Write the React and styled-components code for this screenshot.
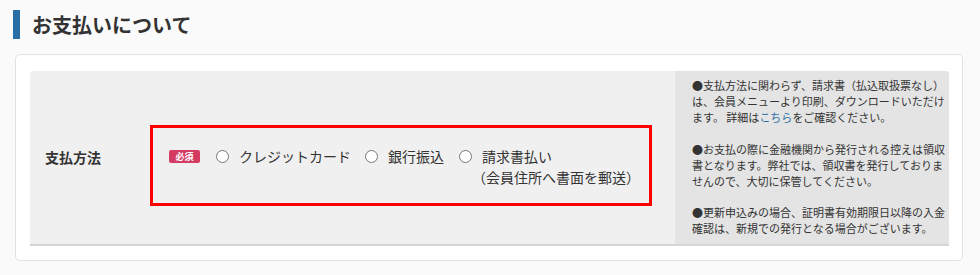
import React from "react";
import styled, { createGlobalStyle } from "styled-components";

const Global = createGlobalStyle`
  html, body { margin: 0; padding: 0; background: #fafafa; }
  body { font-family: "Noto Sans CJK JP", "Noto Sans", sans-serif; color: #333; }
  p { margin: 0; }
`;

const Page = styled.div`
  padding: 10px 17px 0 13px;
`;

const Heading = styled.h2`
  margin: 0;
  display: flex;
  align-items: center;
  gap: 12px;
  height: 29px;
  font-size: 20px;
  font-weight: 700;
  color: #333;
  line-height: 29px;
  &::before {
    content: "";
    width: 7px;
    height: 29px;
    background: #2a6ea6;
  }
`;

const Card = styled.section`
  margin: 15px 0 0 2px;
  background: #fff;
  border: 1px solid #e2e2e2;
  border-radius: 5px;
  padding: 16px 13px 14px 14px;
`;

const Row = styled.div`
  display: flex;
  background: #f0f0f0;
  border-bottom: 2px solid #d6d6d6;
  border-radius: 3px 4px 0 0;
`;

const Label = styled.div`
  width: 120px;
  flex: none;
  box-sizing: border-box;
  padding-left: 15px;
  display: flex;
  align-items: center;
  font-size: 14px;
  font-weight: 700;
  color: #333;
`;

const Content = styled.div`
  flex: 1;
  display: flex;
  align-items: flex-start;
  padding-top: 54px;
`;

const Highlight = styled.div`
  width: 502px;
  box-sizing: border-box;
  border: 3px solid #ff0000;
  padding: 18px 10px 15px 16px;
  display: flex;
  align-items: flex-start;
`;

const Badge = styled.span`
  flex: none;
  width: 31px;
  height: 13px;
  margin-top: 4px;
  border-radius: 2px;
  background: #d33b63;
  color: #fff;
  font-size: 9px;
  font-weight: 700;
  line-height: 13px;
  text-align: center;
  margin-right: 16px;
`;

const Option = styled.label`
  display: flex;
  align-items: flex-start;
  font-size: 14px;
  line-height: 21px;
  color: #333;
  margin-right: ${(p) => p.$gap}px;
`;

const Radio = styled.span`
  flex: none;
  width: 13px;
  height: 13px;
  box-sizing: border-box;
  border: 1px solid #767676;
  border-radius: 50%;
  background: #fff;
  margin-top: 4px;
  margin-right: 10px;
`;

const OptionText = styled.span`
  display: flex;
  flex-direction: column;
  white-space: nowrap;
`;

const SubNote = styled.span`
  margin-left: -10px;
`;

const Notes = styled.div`
  width: 274px;
  flex: none;
  box-sizing: border-box;
  background: #e4e4e4;
  border-radius: 0 4px 0 0;
  padding: 6px 4px 7px 17px;
  font-size: 11px;
  line-height: 16.2px;
  color: #333;
  white-space: nowrap;
  p + p { margin-top: 15px; }
`;

const Link = styled.a`
  color: #2a6ea6;
  text-decoration: none;
`;

export default function App() {
  return (
    <>
      <Global />
      <Page>
        <Heading>お支払いについて</Heading>
        <Card>
          <Row>
            <Label>支払方法</Label>
            <Content>
              <Highlight>
                <Badge>必須</Badge>
                <Option $gap={14}>
                  <Radio />
                  <OptionText>クレジットカード</OptionText>
                </Option>
                <Option $gap={15}>
                  <Radio />
                  <OptionText>銀行振込</OptionText>
                </Option>
                <Option $gap={0}>
                  <Radio />
                  <OptionText>
                    <span>請求書払い</span>
                    <SubNote>（会員住所へ書面を郵送）</SubNote>
                  </OptionText>
                </Option>
              </Highlight>
            </Content>
            <Notes>
              <p>
                ●支払方法に関わらず、請求書（払込取扱票なし）
                <br />
                は、会員メニューより印刷、ダウンロードいただけ
                <br />
                ます。 詳細は<Link href="#">こちら</Link>をご確認ください。
              </p>
              <p>
                ●お支払の際に金融機関から発行される控えは領収
                <br />
                書となります。弊社では、領収書を発行しておりま
                <br />
                せんので、大切に保管してください。
              </p>
              <p>
                ●更新申込みの場合、証明書有効期限日以降の入金
                <br />
                確認は、新規での発行となる場合がございます。
              </p>
            </Notes>
          </Row>
        </Card>
      </Page>
    </>
  );
}
